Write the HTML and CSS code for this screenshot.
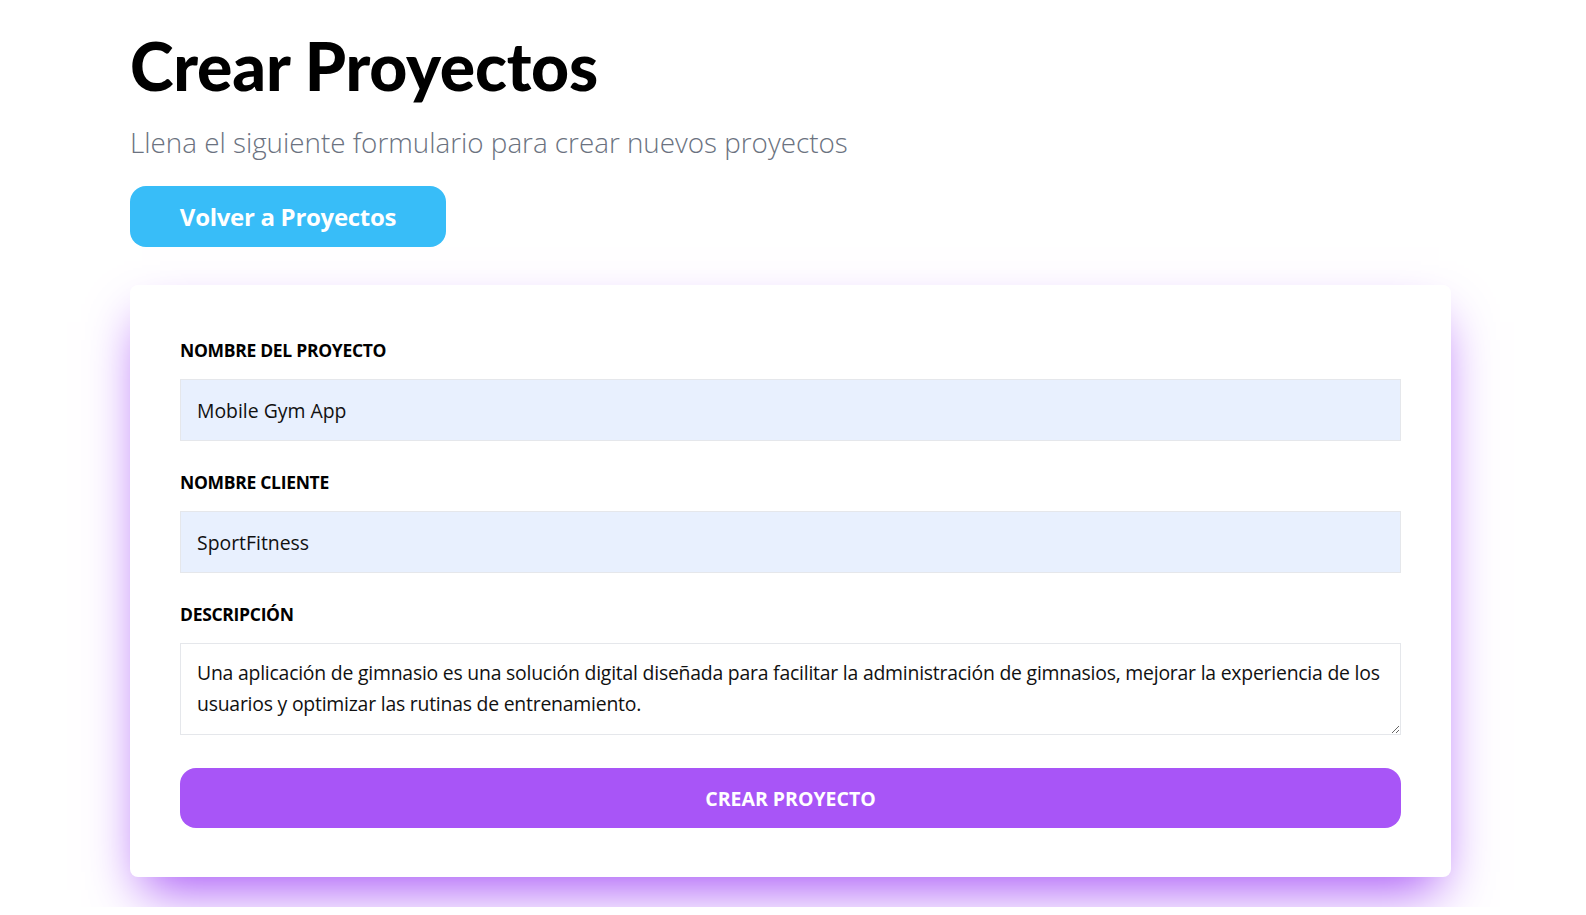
FILE: index.html
```html
<!DOCTYPE html>
<html lang="es">
<head>
<meta charset="utf-8">
<title>Crear Proyectos</title>
<link rel="stylesheet" href="styles.css">
</head>
<body>
<main class="page">
  <h1 class="title">Crear Proyectos</h1>
  <p class="subtitle">Llena el siguiente formulario para crear nuevos proyectos</p>
  <div class="actions">
    <a class="btn-back" href="#">Volver a Proyectos</a>
  </div>
  <form class="card">
    <div class="field">
      <label class="label" for="nombre">NOMBRE DEL PROYECTO</label>
      <input class="input filled" id="nombre" type="text" value="Mobile Gym App">
    </div>
    <div class="field">
      <label class="label" for="cliente">NOMBRE CLIENTE</label>
      <input class="input filled" id="cliente" type="text" value="SportFitness">
    </div>
    <div class="field">
      <label class="label" for="descripcion">DESCRIPCIÓN</label>
      <textarea class="input textarea" id="descripcion">Una aplicación de gimnasio es una solución digital diseñada para facilitar la administración de gimnasios, mejorar la experiencia de los usuarios y optimizar las rutinas de entrenamiento.</textarea>
    </div>
    <button class="btn-submit" type="button">CREAR PROYECTO</button>
  </form>
</main>
</body>
</html>
```

FILE: styles.css
```css
* { box-sizing: border-box; }
html, body { margin: 0; padding: 0; background: #fff; }
body {
  font-family: "Open Sans", "Noto Sans", "Liberation Sans", sans-serif;
  color: #000;
}
.page {
  width: 1321px;
  margin-left: 130px;
  padding-top: 28px;
  padding-bottom: 30px;
}
.title {
  margin: 0;
  font-family: "Lato", "Noto Sans", sans-serif;
  font-weight: 900;
  font-size: 66px;
  line-height: 76px;
  letter-spacing: -0.2px;
}
.subtitle {
  margin: 18px 0 0;
  font-family: "Open Sans", sans-serif;
  font-weight: 300;
  font-size: 27.8px;
  line-height: 40px;
  color: #6b7280;
}
.actions {
  margin-top: 24px;
  display: flex;
}
.btn-back {
  display: flex;
  align-items: center;
  justify-content: center;
  width: 316px;
  height: 61px;
  background: #38bdf8;
  color: #fff;
  border-radius: 16px;
  text-decoration: none;
  font-family: "Open Sans", sans-serif;
  font-weight: 700;
  font-size: 24px;
  letter-spacing: -0.3px;
}
.card {
  margin-top: 38px;
  background: #fff;
  border-radius: 8px;
  box-shadow: 0 25px 50px -12px #a855f7;
  padding: 53px 50px 49px;
  display: flex;
  flex-direction: column;
}
.field {
  display: flex;
  flex-direction: column;
  margin-bottom: 29px;
}
.label {
  font-weight: 700;
  font-size: 17.5px;
  line-height: 24px;
  letter-spacing: -0.3px;
  margin-bottom: 17px;
}
.input {
  width: 100%;
  height: 62px;
  border: 1px solid #e5e7eb;
  padding: 0 16px;
  font-family: "Open Sans", sans-serif;
  font-size: 19.4px;
  color: #111;
  outline: none;
  border-radius: 0;
}
.filled { background: #e8f0fe; }
.textarea {
  height: 92px;
  padding: 14px 16px;
  line-height: 30.5px;
  letter-spacing: -0.22px;
  background: #fff;
  resize: vertical;
  display: block;
}
.btn-submit {
  margin-top: 4px;
  height: 60px;
  border: 0;
  border-radius: 16px;
  background: #a855f7;
  color: #fff;
  font-family: "Open Sans", sans-serif;
  font-weight: 700;
  font-size: 19.5px;
  cursor: pointer;
}
```
